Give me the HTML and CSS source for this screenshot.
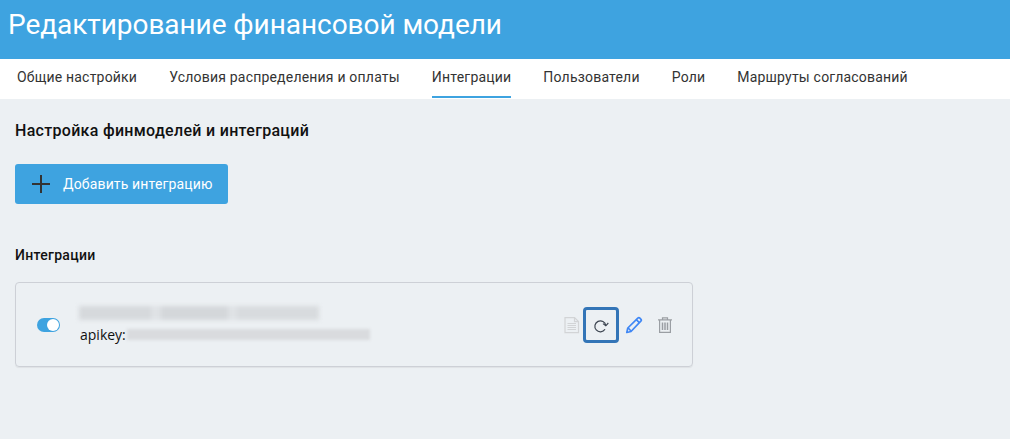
FILE: index.html
```html
<!DOCTYPE html>
<html lang="ru">
<head>
<meta charset="utf-8">
<title>Редактирование финансовой модели</title>
<link rel="stylesheet" href="styles.css">
</head>
<body>
<header class="hero"><h1 class="hero-title">Редактирование финансовой модели</h1></header>
<nav class="tabs">
  <a class="tab">Общие настройки</a>
  <a class="tab">Условия распределения и оплаты</a>
  <a class="tab tab-active">Интеграции</a>
  <a class="tab">Пользователи</a>
  <a class="tab">Роли</a>
  <a class="tab">Маршруты согласований</a>
</nav>
<main class="content">
  <h2 class="section-title">Настройка финмоделей и интеграций</h2>
  <button class="add-btn">
    <svg class="add-icon" width="20" height="20" viewBox="0 0 20 20"><path d="M10 1v18M1 10h18" stroke="#333" stroke-width="2" fill="none"/></svg>
    <span>Добавить интеграцию</span>
  </button>
  <h3 class="list-title">Интеграции</h3>
  <section class="card">
    <div class="toggle"><span class="knob"></span></div>
    <div class="info">
      <div class="blur-name"></div>
      <div class="key-row"><span class="key-label">apikey:</span><span class="blur-key"></span></div>
    </div>
    <div class="actions">
      <svg class="doc" width="18" height="18" viewBox="0 0 18 18" fill="none" stroke="#d2d4d6" stroke-width="1.2"><path d="M2 1.600h9.500l4 4v11H2z"/><path d="M11.500 1.600v4h4M4.500 7.500h8.500M4.500 9.500h8.500M4.500 11.500h8.500M4.500 13.500h8.500"/></svg>
      <button class="refresh">
        <svg width="18" height="18" viewBox="0 0 18 18" fill="none" stroke="#3c4450" stroke-width="1.200"><path d="M13 13.300A5.500 5.500 0 1 1 13.800 9.500"/><path d="M11 7.600l2.800 2.200 2.500-2.800"/></svg>
      </button>
      <svg class="pen" width="18" height="18" viewBox="0 0 18 18" fill="none" stroke="#3f87f5" stroke-width="1.700" stroke-linejoin="round"><path d="M1.800 16.500l1-4.500L12.800 2.200a1.500 1.500 0 0 1 2.100 0l.9.9a1.500 1.500 0 0 1 0 2.100L6 15.500z"/><path d="M11.300 3.700l3 3M3.200 12l2.800 3"/></svg>
      <svg class="bin" width="16" height="18" viewBox="0 0 16 18" fill="none" stroke="#9a9ea3" stroke-width="1.200"><path d="M1 3.800h14M5.500 3.800V1.800h5v2M2.600 3.800v12.600h10.800V3.800"/><path d="M5.500 6.500v7.500M8 6.500v7.500M10.500 6.500v7.500" stroke-width="1.500"/></svg>
    </div>
  </section>
</main>
</body>
</html>
```
FILE: styles.css
```css
* { box-sizing: border-box; }
html, body { margin: 0; height: 100%; }
body { background: #ecf0f3; font-family: Roboto, "Noto Sans", sans-serif; color: #111; overflow: hidden; }
.hero { height: 59px; background: #3ea3e0; padding: 0 8px; display: flex; align-items: flex-start; }
.hero-title { margin: 6px 0 0; font-size: 28px; line-height: 38px; font-weight: 400; color: #fff; letter-spacing: -0.06px; white-space: nowrap; }
.tabs { height: 40px; background: #fff; display: flex; gap: 32px; padding-left: 17px; }
.tab { height: 39px; font-size: 14px; line-height: 36px; color: #333; letter-spacing: 0.2px; white-space: nowrap; }
.tab-active { border-bottom: 2px solid #3ea3e0; }
.content { padding: 0 15px; }
.section-title { margin: 23px 0 0; font-size: 16px; line-height: 18px; font-weight: 500; color: #111; letter-spacing: 0.3px; }
.add-btn { margin-top: 24px; width: 213px; height: 40px; border: 0; border-radius: 3px; background: #3ea3e0; color: #fff; display: flex; align-items: center; gap: 12px; padding: 0 0 0 16px; font: 400 14px Roboto, sans-serif; letter-spacing: 0.15px; }
.add-icon { flex: none; }
.list-title { margin: 43px 0 0; font-size: 14px; line-height: 16px; font-weight: 500; color: #111; letter-spacing: 0.3px; }
.card { margin-top: 19px; width: 678px; height: 85px; border: 1px solid #cdd0d6; border-radius: 4px; box-shadow: 0 1px 1px rgba(0,0,0,.06); display: flex; align-items: center; padding: 0 19px 0 21px; }
.toggle { width: 23px; height: 14px; border-radius: 7px; background: #3ea3e0; position: relative; flex: none; }
.knob { position: absolute; right: 1px; top: 1px; width: 12px; height: 12px; border-radius: 50%; background: #fff; }
.info { margin-left: 20px; }
.blur-name { width: 240px; height: 14px; margin: 1px 0 0 -1px; background: linear-gradient(90deg, #d6d9dc 0 30%, #dfe2e5 30% 34%, #d4d7da 34% 62%, #dfe2e5 62% 66%, #d8dbde 66% 100%); filter: blur(2px); }
.key-row { display: flex; align-items: center; height: 20px; margin-top: 4px; }
.key-label { font-family: "Open Sans", sans-serif; font-size: 14px; color: #111; }
.blur-key { width: 243px; height: 11px; background: #d9dbde; filter: blur(1.500px); margin-left: 1px; }
.actions { display: flex; align-items: center; margin-left: auto; }
.doc, .pen, .bin { flex: none; }
.refresh { flex: none; width: 36px; height: 36px; margin: 0 6px 0 2px; border: 3px solid #3375b7; border-radius: 4px; background: transparent; padding: 0; display: flex; align-items: center; justify-content: center; }
.bin { margin-left: 14px; }
```
